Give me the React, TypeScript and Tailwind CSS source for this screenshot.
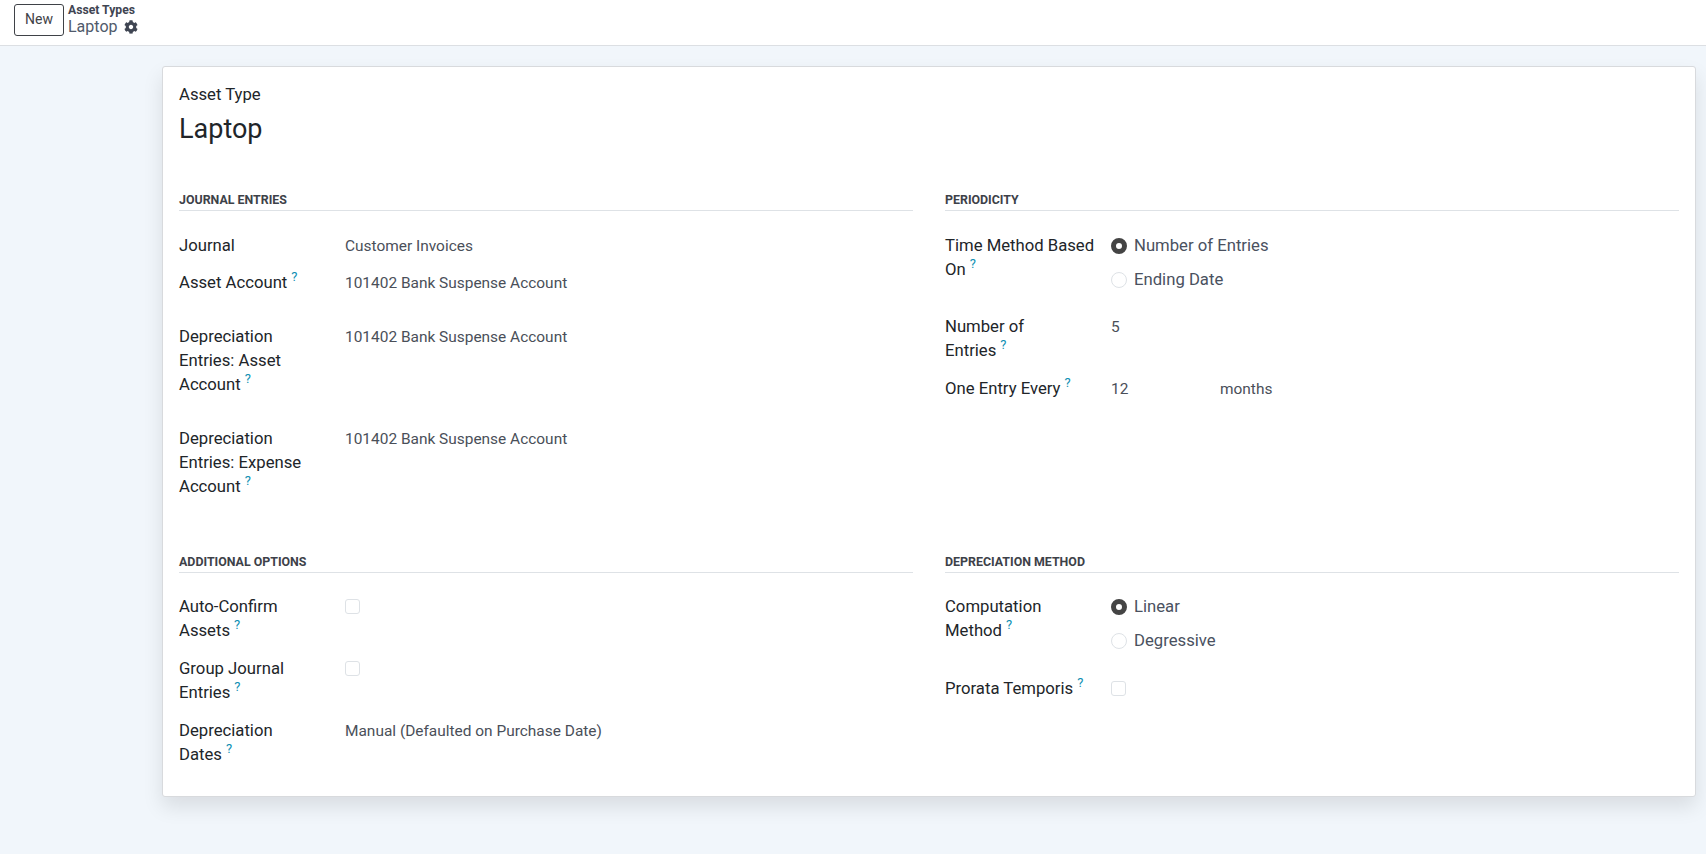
import { FaCog } from "react-icons/fa";

function Help() {
  return <sup className="ml-[4px] text-[13px] leading-none text-[#0d8fb3] top-[-7px]">?</sup>;
}

function Row({ label, help, className = "", children }: { label: string[]; help?: boolean; className?: string; children?: React.ReactNode }) {
  return (
    <div className={"flex " + className}>
      <div className="w-[166px] shrink-0 text-[16.7px] leading-[24px] text-[#212529]">
        {label.map((line, i) => (
          <div key={i} className="whitespace-nowrap">
            {line}
            {help && i === label.length - 1 && <Help />}
          </div>
        ))}
      </div>
      <div className="min-w-0 flex-1 text-[15.45px] leading-[24px] text-[#4a4f59]">{children}</div>
    </div>
  );
}

function Section({ title, className = "", children }: { title: string; className?: string; children: React.ReactNode }) {
  return (
    <section className={className}>
      <h2 className="h-[19px] border-b border-[#dee2e6] text-[12.4px] font-bold uppercase leading-[16px] text-[#3d4148]">{title}</h2>
      {children}
    </section>
  );
}

function Radio({ on, label, className = "" }: { on?: boolean; label: string; className?: string }) {
  return (
    <div className={"flex items-center h-[24px] gap-[7px] text-[16.7px] text-[#4a5160] " + className}>
      {on ? (
        <span className="mb-[1px] h-[16px] w-[16px] rounded-full border-[5px] border-[#444] bg-white" />
      ) : (
        <span className="mb-[1px] h-[16px] w-[16px] rounded-full border border-[#dee2e6] bg-white" />
      )}
      {label}
    </div>
  );
}

function Check() {
  return <span className="mt-[4px] block h-[15px] w-[15px] rounded-[3px] border border-[#dee2e6] bg-white" />;
}

export default function App() {
  return (
    <div className="h-screen overflow-hidden bg-[#f1f6fb] font-['Roboto',sans-serif]">
      <header className="flex h-[46px] items-start gap-[4px] border-b border-[#dcdfe3] bg-white pl-[14px] pt-[4px]">
        <button className="h-[32px] w-[50px] rounded-[3px] border border-[#3f4247] bg-white pb-[1px] text-[14px] text-[#3f4247]">New</button>
        <div className="flex flex-col">
          <span className="mt-[-1px] text-[12.2px] font-bold leading-[14px] text-[#3f4552]">Asset Types</span>
          <span className="flex items-center gap-[6px] text-[16px] leading-[20px] text-[#505a6b]">
            Laptop
            <FaCog className="h-[14px] w-[14px] text-[#3f4552]" />
          </span>
        </div>
      </header>
      <main className="pl-[162px] pr-[10px] pt-[20px]">
        <div className="h-[731px] rounded-[3px] border border-[#d8dadd] bg-white px-[16px] pt-[16px] shadow-[0_10px_20px_rgba(0,0,0,0.1)]">
          <div className="text-[16.7px] leading-[24px] text-[#212529]">Asset Type</div>
          <h1 className="mt-[4px] text-[27px] leading-[36px] text-[#212529]">Laptop</h1>
          <div className="mt-[45px] grid grid-cols-2 gap-x-[32px]">
            <Section title="Journal Entries">
              <Row label={["Journal"]} className="mt-[23px]">Customer Invoices</Row>
              <Row label={["Asset Account"]} help className="mt-[13px]">101402 Bank Suspense Account</Row>
              <Row label={["Depreciation", "Entries: Asset", "Account"]} help className="mt-[30px]">101402 Bank Suspense Account</Row>
              <Row label={["Depreciation", "Entries: Expense", "Account"]} help className="mt-[30px]">101402 Bank Suspense Account</Row>
            </Section>
            <Section title="Periodicity">
              <Row label={["Time Method Based", "On"]} help className="mt-[23px]">
                <Radio on label="Number of Entries" />
                <Radio label="Ending Date" className="mt-[10px]" />
              </Row>
              <Row label={["Number of", "Entries"]} help className="mt-[23px]">5</Row>
              <Row label={["One Entry Every"]} help className="mt-[14px]">
                <div className="flex">
                  <span className="w-[109px]">12</span>
                  <span>months</span>
                </div>
              </Row>
            </Section>
            <Section title="Additional Options" className="mt-[55px]">
              <Row label={["Auto-Confirm", "Assets"]} help className="mt-[22px]"><Check /></Row>
              <Row label={["Group Journal", "Entries"]} help className="mt-[14px]"><Check /></Row>
              <Row label={["Depreciation", "Dates"]} help className="mt-[14px]">Manual (Defaulted on Purchase Date)</Row>
            </Section>
            <Section title="Depreciation Method" className="mt-[55px]">
              <Row label={["Computation", "Method"]} help className="mt-[22px]">
                <Radio on label="Linear" />
                <Radio label="Degressive" className="mt-[10px]" />
              </Row>
              <Row label={["Prorata Temporis"]} help className="mt-[24px]"><Check /></Row>
            </Section>
          </div>
        </div>
      </main>
    </div>
  );
}
